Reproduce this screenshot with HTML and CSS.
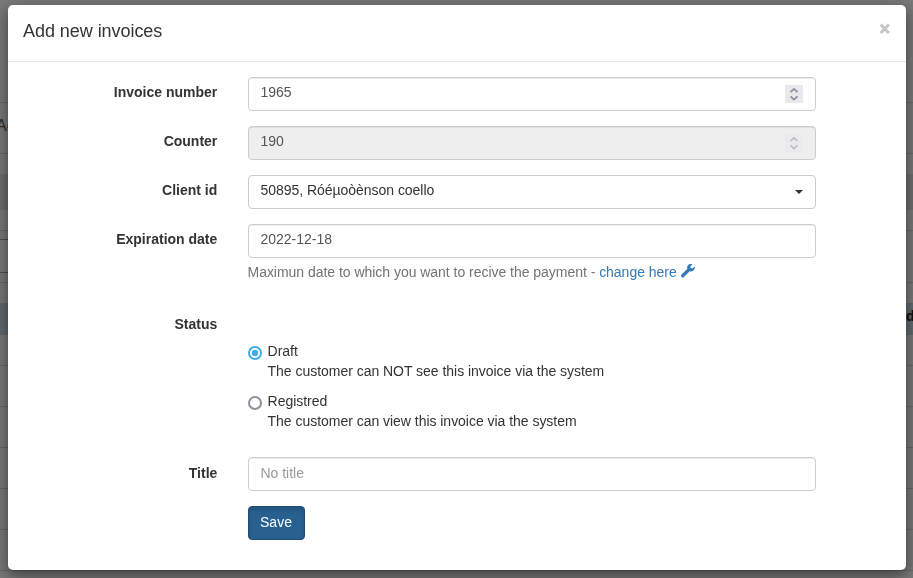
FILE: index.html
```html
<!DOCTYPE html>
<html lang="en">
<head>
<meta charset="utf-8">
<title>Add new invoices</title>
<link rel="stylesheet" href="styles.css">
</head>
<body>
<div class="page">
  <div class="bar top"></div>
  <div class="bar crumb"><span>Ac</span></div>
  <div class="bar gap"></div>
  <div class="bar tools"></div>
  <div class="bar gap line"></div>
  <div class="bar search"><i></i></div>
  <div class="bar gap line-top"></div>
  <div class="bar head"><b>d</b></div>
  <div class="bar first"></div>
  <div class="bar row"></div>
  <div class="bar row"></div>
  <div class="bar row"></div>
  <div class="bar row"></div>
  <div class="bar row"></div>
</div>
<div class="backdrop">
  <div class="modal">
    <div class="modal-header">
      <h4>Add new invoices</h4>
      <button class="close" type="button">×</button>
    </div>
    <form class="modal-body">
      <div class="group">
        <label class="name">Invoice number</label>
        <div class="control"><span>1965</span>
          <svg class="spin" viewBox="0 0 18 18"><path d="M5.500 7.200 9 3.900l3.500 3.300M5.500 11.300 9 14.600l3.500-3.300"/></svg>
        </div>
      </div>
      <div class="group">
        <label class="name">Counter</label>
        <div class="control disabled"><span>190</span>
          <svg class="spin" viewBox="0 0 18 18"><path d="M5.500 7.200 9 3.900l3.500 3.300M5.500 11.300 9 14.600l3.500-3.300"/></svg>
        </div>
      </div>
      <div class="group">
        <label class="name">Client id</label>
        <div class="control select"><span>50895, Róéµoòènson coello</span><i class="caret"></i></div>
      </div>
      <div class="group expiry">
        <label class="name">Expiration date</label>
        <div>
          <div class="control"><span>2022-12-18</span></div>
          <p class="help">Maximun date to which you want to recive the payment - <a>change here <svg class="wrench" viewBox="0 0 14 14"><path d="M13.700 2.600 11.500 4.500 9.600 4.100 9.300 2.400 11.400.3C9.700-.3 7.800.1 6.800 1.500 6.100 2.500 6 3.700 6.400 4.800L.6 10.600C-.1 11.300-.1 12.300.5 13s1.700.7 2.400 0l5.800-5.700c1.300.4 2.700.1 3.700-.8 1.200-1 1.700-2.500 1.300-3.900z"/></svg></a></p>
        </div>
      </div>
      <div class="group status">
        <label class="name">Status</label>
        <div class="options">
          <div class="option"><i class="radio checked"></i><span>Draft<br>The customer can NOT see this invoice via the system</span></div>
          <div class="option"><i class="radio"></i><span>Registred<br>The customer can view this invoice via the system</span></div>
        </div>
      </div>
      <div class="group title">
        <label class="name">Title</label>
        <div class="control placeholder"><span>No title</span></div>
      </div>
      <div class="group">
        <button class="save" type="button">Save</button>
      </div>
    </form>
  </div>
</div>
</body>
</html>
```
FILE: styles.css
```css
* { box-sizing: border-box; }
body {
  margin: 0;
  height: 578px;
  overflow: hidden;
  font: 14px/20px "Liberation Sans", Arial, sans-serif;
  color: #333;
  background: #f0f0f0;
}
.page { display: flex; flex-direction: column; }
.bar { flex: none; border-bottom: 1px solid #cdcdcd; }
.top { height: 103px; }
.crumb { height: 51px; padding-top: 13px; font-size: 16px; margin-left: -4px; color: #555; }
.gap { height: 20px; border: 0; }
.tools { height: 36px; background: #dcdcdc; border: 0; }
.line { height: 21px; border-bottom: 1px solid #cdcdcd; }
.search { height: 52px; padding-top: 8px; }
.search i { display: block; width: 200px; height: 34px; margin-left: -4px; border: 1px solid #999; }
.line-top { height: 20px; }
.head { height: 32px; background: #bfd3dd; display: flex; justify-content: flex-end; padding: 3px 0 0; }
.head b { width: 7px; color: #222; }
.first { height: 31px; }
.row { height: 41px; }
.backdrop { position: fixed; inset: 0; padding: 5px 7px 8px 8px; background: rgba(0, 0, 0, .5); }
.modal {
  height: 565px;
  background: #fff;
  border-radius: 5px;
  box-shadow: 0 5px 15px rgba(0, 0, 0, .5);
}
.modal-header {
  display: flex;
  justify-content: space-between;
  height: 57px;
  padding: 14px 16px 0 15px;
  border-bottom: 1px solid #e5e5e5;
}
h4 { margin: 0; font-size: 18px; font-weight: 500; line-height: 25px; letter-spacing: -.05px; }
.close {
  border: 0;
  padding: 0;
  height: 20px;
  background: none;
  color: #c4c4c4;
  -webkit-text-stroke: .8px #c4c4c4;
  font: bold 18px/20px "Liberation Sans", Arial, sans-serif;
}
.modal-body { padding: 15px 90px 0 15px; }
.group {
  display: grid;
  grid-template-columns: 195px 568px;
  column-gap: 30px;
  margin-bottom: 15px;
}
.name { padding: 5px .7px 0 0; font-weight: bold; text-align: right; }
.control {
  display: flex;
  justify-content: space-between;
  height: 34px;
  padding: 4px 12px 8px 11.400px;
  border: 1px solid #ccc;
  border-radius: 4px;
  color: #555;
  box-shadow: inset 0 1px 1px rgba(0, 0, 0, .075);
}
.disabled { background: #eee; }
.spin { width: 18px; height: 18px; margin-top: 3px; background: #e9e9ed; }
.spin path { fill: none; stroke: #8f8f9d; stroke-width: 1.8; }
.disabled .spin { opacity: .5; }
.select { color: #333; box-shadow: none; }
.select span, .help, .option span { letter-spacing: -.03px; }
.caret {
  height: 4px;
  margin-top: 10px;
  border: 4px solid transparent;
  border-top-color: #333;
  border-bottom: 0;
}
.title .name { padding-top: 6px; }
.placeholder { padding-top: 5px; color: #999; }
.help { margin: 4px 0 0 -.500px; color: #737373; }
.help a { color: #337ab7; }
.wrench { width: 14px; height: 14px; vertical-align: -1px; fill: #337ab7; }
.expiry { margin-bottom: 28px; }
.status { margin-bottom: 26px; }
.status .name { padding-top: 4px; }
.options { padding-top: 31px; }
.option { display: flex; gap: 5.600px; margin-bottom: 10px; }
.option:last-child { margin-bottom: 0; }
.radio {
  width: 14px;
  height: 14px;
  margin-top: 5px;
  border: 2px solid #8f8f9d;
  border-radius: 50%;
}
.radio.checked { border-color: #3daee9; background: radial-gradient(circle, #3daee9 3px, #fff 3.600px); }
.save {
  grid-column: 2;
  justify-self: start;
  width: 57px;
  height: 34px;
  padding: 0 1px 2px 0;
  border: 1px solid #204d74;
  border-radius: 4px;
  background: #286090;
  box-shadow: inset 0 3px 5px rgba(0, 0, 0, .125);
  color: #fff;
  font: 14px/20px "Liberation Sans", Arial, sans-serif;
}
```
